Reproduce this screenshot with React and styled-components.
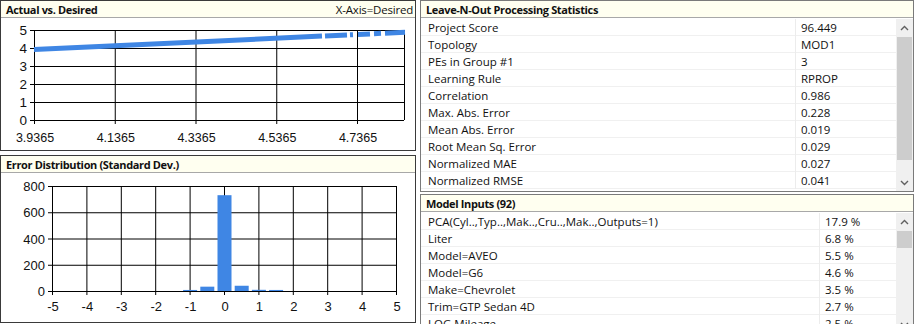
import React from "react";
import styled, { createGlobalStyle } from "styled-components";

const Global = createGlobalStyle`
  html, body { margin: 0; padding: 0; background: #fff; }
  body { font-family: "Open Sans", "Noto Sans", sans-serif; }
`;

const Root = styled.div`
  display: flex;
  gap: 4px;
  width: 914px;
  height: 324px;
  overflow: hidden;
  background: #fff;
`;

const Column = styled.div`
  display: flex;
  flex-direction: column;
  gap: ${(p) => p.$gap}px;
  width: ${(p) => p.$w}px;
  flex: none;
`;

const Panel = styled.section`
  box-sizing: border-box;
  height: ${(p) => p.$h}px;
  flex: none;
  border: 1px solid ${(p) => p.$border};
  display: flex;
  flex-direction: column;
  overflow: hidden;
  background: #fff;
`;

const Header = styled.header`
  box-sizing: border-box;
  height: 17px;
  flex: none;
  background: #fffff0;
  border-bottom: 1px solid #a8a8a8;
  display: flex;
  align-items: center;
  justify-content: space-between;
  padding: 0 2px 0 5px;
  font-family: "Open Sans", sans-serif;
  font-size: 11px;
  color: #111;
`;

const Title = styled.span`
  font-weight: 700;
  letter-spacing: -0.35px;
`;

const Note = styled.span`
  font-weight: 400;
  font-size: 11.5px;
  letter-spacing: -0.2px;
`;

const ChartSvg = styled.svg`
  display: block;
  flex: none;
`;

const TableArea = styled.div`
  display: flex;
  flex: 1;
  margin-top: 1px;
  min-height: 0;
`;

const Rows = styled.div`
  flex: 1;
  display: flex;
  flex-direction: column;
  overflow: hidden;
`;

const Row = styled.div`
  display: grid;
  grid-template-columns: 1fr ${(p) => p.$valW}px;
  height: 17px;
  flex: none;
  box-sizing: border-box;
  border-bottom: 1px solid #f0f0f0;
  font-family: "Open Sans", sans-serif;
  font-size: 11.5px;
  color: #111;
  line-height: 16px;
  padding-top: 1px;
`;

const Label = styled.div`
  padding-left: 7px;
  white-space: nowrap;
  overflow: hidden;
`;

const Value = styled.div`
  padding-left: 5px;
  margin-top: -1px;
  padding-top: 1px;
  border-left: 1px solid #ececec;
  white-space: nowrap;
`;

const Scroll = styled.div`
  width: 17px;
  flex: none;
  background: #f0f0f0;
  display: flex;
  flex-direction: column;
`;

const Arrow = styled.div`
  height: 17px;
  flex: none;
  display: flex;
  align-items: center;
  justify-content: center;
`;

const Track = styled.div`
  flex: 1;
  display: flex;
  flex-direction: column;
`;

const Thumb = styled.div`
  margin: 0 1px;
  background: #cdcdcd;
`;

const Chevron = ({ up }) => (
  <svg width="9" height="6" viewBox="0 0 9 6">
    <path
      d={up ? "M1 5 L4.5 1.5 L8 5" : "M1 1 L4.5 4.5 L8 1"}
      fill="none"
      stroke="#606060"
      strokeWidth="1.4"
    />
  </svg>
);

const ScrollBar = ({ top, size }) => (
  <Scroll>
    <Arrow>
      <Chevron up />
    </Arrow>
    <Track>
      <Thumb style={{ marginTop: top, height: size }} />
    </Track>
    <Arrow>
      <Chevron />
    </Arrow>
  </Scroll>
);

const BLUE = "#3f86e4";
const LABEL_FONT = { fontFamily: "'Liberation Sans', Arial, sans-serif", fill: "#111" };

/* Chart 1: Actual vs Desired. svg origin = page (1,18) */
const ActualChart = () => {
  const L = 33, R = 403, T = 12, B = 102;
  const xs = [3.9365, 4.1365, 4.3365, 4.5365, 4.7365];
  const xp = (v) => L + ((v - 3.9365) / 0.2) * 80.75;
  const yp = (v) => B - v * 18;
  const lineY = (x) => 31.5 + ((x - L) / (R - L)) * (14.3 - 31.5);
  const segs = [
    [L, 321],
    [324, 346],
    [349, 352],
    [357, 369],
    [373, 380],
    [384, R + 1],
  ];
  return (
    <ChartSvg width="414" height="132">
      {[0, 1, 2, 3, 4, 5].map((v) => (
        <g key={v}>
          <line x1={L - 4} x2={R} y1={yp(v) + 0.5} y2={yp(v) + 0.5} stroke="#000" />
          <text x={L - 7} y={yp(v) + 5} textAnchor="end" fontSize="13.5" style={LABEL_FONT}>
            {v}
          </text>
        </g>
      ))}
      {xs.map((v) => (
        <g key={v}>
          <line x1={xp(v) + 0.5} x2={xp(v) + 0.5} y1={T} y2={B + 4} stroke="#000" />
          <text x={xp(v) + 1} y={B + 22} textAnchor="middle" fontSize="12.5" style={LABEL_FONT}>
            {v.toFixed(4)}
          </text>
        </g>
      ))}
      <line x1={R + 0.5} x2={R + 0.5} y1={T} y2={B} stroke="#000" />
      {segs.map(([a, b], i) => (
        <line key={i} x1={a} x2={b} y1={lineY(a)} y2={lineY(b)} stroke={BLUE} strokeWidth="5" />
      ))}
    </ChartSvg>
  );
};

/* Chart 2: Error distribution. svg origin = page (1,172) */
const ErrorChart = () => {
  const L = 51, R = 395, T = 13, B = 118;
  const xp = (v) => L + ((v + 5) / 10) * (R - L);
  const yp = (v) => B - (v / 800) * (B - T);
  const bars = [
    [-1, 8],
    [-0.5, 33],
    [0, 730],
    [0.5, 40],
    [1, 9],
    [1.5, 8],
  ];
  return (
    <ChartSvg width="414" height="150">
      {[0, 200, 400, 600, 800].map((v) => (
        <g key={v}>
          <line x1={L - 4} x2={R} y1={yp(v) + 0.5} y2={yp(v) + 0.5} stroke="#000" />
          <text x={L - 7} y={yp(v) + 5} textAnchor="end" fontSize="13" style={LABEL_FONT}>
            {v}
          </text>
        </g>
      ))}
      {[-5, -4, -3, -2, -1, 0, 1, 2, 3, 4, 5].map((v) => (
        <g key={v}>
          <line x1={xp(v) + 0.5} x2={xp(v) + 0.5} y1={T} y2={B + 4} stroke="#000" />
          <text x={xp(v) + 1} y={B + 20} textAnchor="middle" fontSize="13" style={LABEL_FONT}>
            {v}
          </text>
        </g>
      ))}
      {bars.map(([c, h]) => (
        <rect
          key={c}
          x={xp(c) - 6.5}
          width="14"
          y={yp(h)}
          height={B - yp(h)}
          fill={BLUE}
        />
      ))}
    </ChartSvg>
  );
};

const stats = [
  ["Project Score", "96.449"],
  ["Topology", "MOD1"],
  ["PEs in Group #1", "3"],
  ["Learning Rule", "RPROP"],
  ["Correlation", "0.986"],
  ["Max. Abs. Error", "0.228"],
  ["Mean Abs. Error", "0.019"],
  ["Root Mean Sq. Error", "0.029"],
  ["Normalized MAE", "0.027"],
  ["Normalized RMSE", "0.041"],
];

const inputs = [
  ["PCA(Cyl..,Typ..,Mak..,Cru..,Mak..,Outputs=1)", "17.9 %"],
  ["Liter", "6.8 %"],
  ["Model=AVEO", "5.5 %"],
  ["Model=G6", "4.6 %"],
  ["Make=Chevrolet", "3.5 %"],
  ["Trim=GTP Sedan 4D", "2.7 %"],
  ["LOG Mileage", "2.5 %"],
];

export default function App() {
  return (
    <Root>
      <Global />
      <Column $w={416} $gap={4}>
        <Panel $h={151} $border="#3a3a3a">
          <Header>
            <Title>Actual vs. Desired</Title>
            <Note>X-Axis=Desired</Note>
          </Header>
          <ActualChart />
        </Panel>
        <Panel $h={168} $border="#3a3a3a">
          <Header>
            <Title>Error Distribution (Standard Dev.)</Title>
          </Header>
          <ErrorChart />
        </Panel>
      </Column>
      <Column $w={494} $gap={2}>
        <Panel $h={192} $border="#7a7a7a">
          <Header>
            <Title>Leave-N-Out Processing Statistics</Title>
          </Header>
          <TableArea>
            <Rows>
              {stats.map(([k, v]) => (
                <Row key={k} $valW={101}>
                  <Label>{k}</Label>
                  <Value>{v}</Value>
                </Row>
              ))}
            </Rows>
            <ScrollBar top={1} size={123} />
          </TableArea>
        </Panel>
        <Panel $h={140} $border="#7a7a7a">
          <Header>
            <Title>Model Inputs (92)</Title>
          </Header>
          <TableArea>
            <Rows>
              {inputs.map(([k, v]) => (
                <Row key={k} $valW={77}>
                  <Label>{k}</Label>
                  <Value>{v}</Value>
                </Row>
              ))}
            </Rows>
            <ScrollBar top={1} size={17} />
          </TableArea>
        </Panel>
      </Column>
    </Root>
  );
}
